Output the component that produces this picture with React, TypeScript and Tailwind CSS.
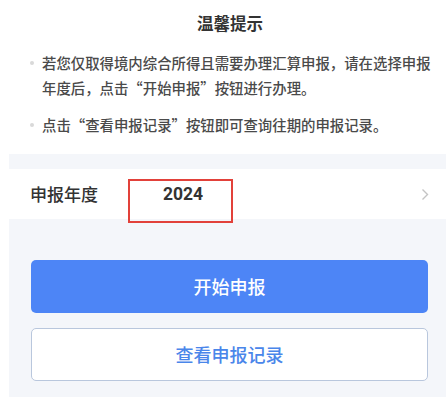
import React from 'react';

const cjk = { fontFamily: '"Noto Sans CJK SC", "Noto Sans", sans-serif' };

const Tip = ({ children, className = '' }: { children: React.ReactNode; className?: string }) => (
  <div className={`flex items-start ${className}`}>
    <span className="mt-[11px] ml-[30px] mr-[8px] h-[4px] w-[4px] shrink-0 rounded-full bg-[#d9d9d9]" />
    <p className="pr-[14px] text-[14.4px] font-medium leading-[25px] text-[#4a4a4a]">{children}</p>
  </div>
);

export default function App() {
  return (
    <div className="h-[397px] w-[446px] overflow-hidden bg-white" style={cjk}>
      {/* 温馨提示 */}
      <div className="pt-[11px]">
        <h2 className="pl-[14px] text-center text-[16.5px] font-bold leading-[24px] text-[#333]">温馨提示</h2>
        <Tip className="mt-[15px]">
          若您仅取得境内综合所得且需要办理汇算申报，请在选择申报年度后，点击“开始申报”按钮进行办理。
        </Tip>
        <Tip className="mt-[12px]">点击“查看申报记录”按钮即可查询往期的申报记录。</Tip>
      </div>

      <div className="ml-[9px] mt-[17px] bg-[#f4f6fa] pt-[15px]">
        {/* 申报年度 */}
        <div className="relative flex h-[50px] items-center bg-white pl-[21px] pr-[17px]">
          <span className="text-[17px] font-medium text-[#333]">申报年度</span>
          <span className="ml-[65px] text-[17.5px] font-bold text-[#333]" style={{ fontFamily: 'Roboto, "Noto Sans CJK SC", sans-serif' }}>
            2024
          </span>
          <div className="absolute left-[119px] top-[10px] h-[44px] w-[105px] border-2 border-[#e2413a]" />
          <svg className="ml-auto" width="8" height="13" viewBox="0 0 8 13" fill="none">
            <path d="M1.5 1.5l5 5-5 5" stroke="#c4c4c4" strokeWidth="1.4" />
          </svg>
        </div>

        {/* buttons */}
        <div className="flex flex-col gap-[15px] pl-[22px] pr-[18px] pb-[20px] pt-[41px]">
          <button className="h-[53px] w-full rounded-[5px] bg-[#4d85f6] text-[18px] font-medium text-white">开始申报</button>
          <button className="h-[53px] w-full rounded-[5px] border border-[#b9c7dd] bg-white text-[18px] font-medium text-[#4a86ea]">
            查看申报记录
          </button>
        </div>
      </div>
    </div>
  );
}
